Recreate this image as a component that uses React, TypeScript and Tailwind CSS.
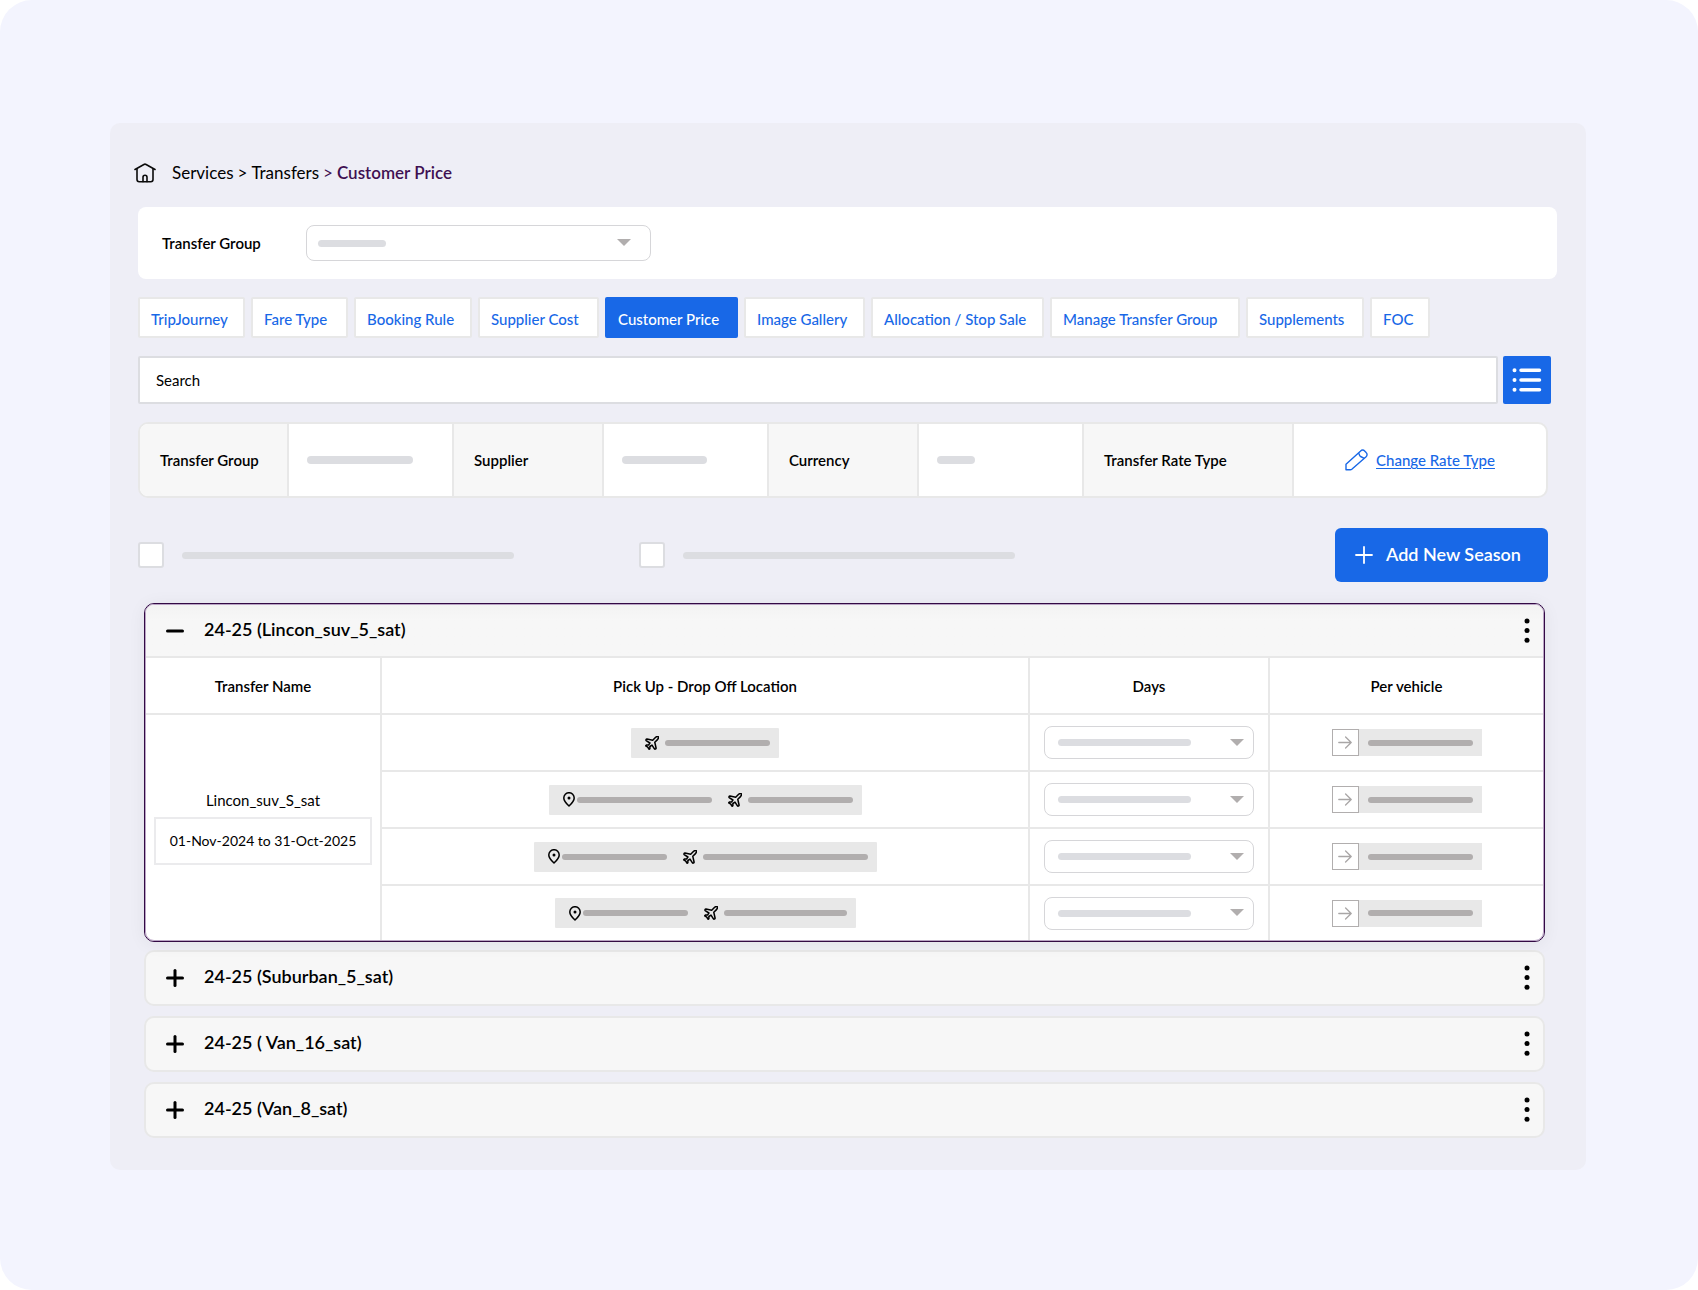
import React from "react";

const tabs = [
  { label: "TripJourney", width: "w-[107px]" },
  { label: "Fare Type", width: "w-[97px]" },
  { label: "Booking Rule", width: "w-[118px]" },
  { label: "Supplier Cost", width: "w-[121px]" },
  { label: "Customer Price", width: "w-[133px]", active: true },
  { label: "Image Gallery", width: "w-[121px]" },
  { label: "Allocation / Stop Sale", width: "w-[173px]" },
  { label: "Manage Transfer Group", width: "w-[190px]" },
  { label: "Supplements", width: "w-[118px]" },
  { label: "FOC", width: "w-[60px]" },
];

const routes = [
  { plane: "w-[105px]" },
  { pin: "w-[135px]", plane: "w-[105px]" },
  { pin: "w-[105px]", plane: "w-[165px]" },
  { pin: "w-[105px]", plane: "w-[123px]" },
];

const closedSeasons = ["24-25 (Suburban_5_sat)", "24-25 ( Van_16_sat)", "24-25 (Van_8_sat)"];

function Bar({ className }: { className: string }) {
  return <span className={`block shrink-0 rounded-full ${className}`} />;
}

function HomeIcon() {
  return (
    <svg width="22" height="20" viewBox="0 0 22 20" fill="none" stroke="#0b0b0b" strokeWidth="1.6" strokeLinecap="round" strokeLinejoin="round">
      <path d="M1 6.5 9.900 1.500a2.200 2.200 0 0 1 2.200 0L21 6.500" />
      <path d="M3 6v10.600A2.200 2.200 0 0 0 5.200 18.800H16.800A2.200 2.200 0 0 0 19 16.600V6" />
      <path d="M9 18.600V14.200a2 2 0 0 1 4 0v4.400" />
    </svg>
  );
}

function PencilIcon() {
  return (
    <svg width="23" height="22" viewBox="0 0 23 22" fill="none" stroke="#1868e7" strokeWidth="1.400" strokeLinejoin="round">
      <path d="M1 20.800V15.300L15.400 2.200a3.200 3.200 0 0 1 4.500 0l1.200 1.200a3 3 0 0 1 0 4.400L6.800 20.300q-.6.5-1.400.5Z" />
      <path d="m13.600 3.900 1.100 2.600q.3.700.9 1l3.700 1.900" />
    </svg>
  );
}

function ListIcon() {
  return (
    <svg width="30" height="26" viewBox="0 0 30 26" fill="none" stroke="#fff" strokeWidth="4" strokeLinecap="round">
      <path d="M2.500 3.300h.01M2.500 13h.01M2.500 22.700h.01" />
      <path strokeWidth="3.500" d="M9 3.300h18.500M9 13h18.500M9 22.700h18.500" />
    </svg>
  );
}

function PlaneIcon() {
  return (
    <svg className="shrink-0" width="14" height="14" viewBox="2 2 20 20" fill="none" stroke="#000" strokeWidth="2.200" strokeLinecap="round" strokeLinejoin="round">
      <path d="M17.8 19.2 16 11l3.500-3.500C21 6 21.500 4 21 3c-1-.5-3 0-4.500 1.500L13 8 4.800 6.200c-.5-.1-.9.1-1.100.5l-.3.5c-.2.5-.1 1 .3 1.300L9 12l-2 3H4l-1 1 3 2 2 3 1-1v-3l3-2 3.500 5.300c.3.4.8.5 1.300.3l.5-.2c.4-.3.6-.7.5-1.200z" />
    </svg>
  );
}

function PinIcon() {
  return (
    <svg className="shrink-0" width="12" height="15" viewBox="0 0 12 15" fill="none" stroke="#000" strokeWidth="1.500" strokeLinejoin="round">
      <path d="M6 14Q.8 9.200.8 5.900a5.200 5.200 0 0 1 10.400 0Q11.200 9.200 6 14Z" />
      <circle cx="6" cy="6" r="1.500" fill="#000" stroke="none" />
    </svg>
  );
}

function Caret() {
  return (
    <svg width="14" height="8" viewBox="0 0 14 8" fill="#b1aeae">
      <path d="M0 0h14L7 7Z" />
    </svg>
  );
}

function DotsButton({ label }: { label: string }) {
  return (
    <button type="button" aria-label={label} className="flex w-6 justify-center">
      <svg width="6" height="26" viewBox="0 0 6 26" fill="#000">
        <circle cx="3" cy="3" r="2.500" />
        <circle cx="3" cy="12.600" r="2.500" />
        <circle cx="3" cy="22.200" r="2.500" />
      </svg>
    </button>
  );
}

function SeasonHeader({ title, open }: { title: string; open?: boolean }) {
  return (
    <div className="flex h-full items-center justify-between pr-1 pl-5">
      <button type="button" aria-expanded={!!open} className="flex items-center gap-5 text-[18px] leading-6 font-semibold">
        <svg width="18" height="18" viewBox="0 0 18 18" stroke="#000" strokeWidth="3" strokeLinecap="round">
          <path d="M1.500 9h15" />
          {!open && <path d="M9 1.500v15" />}
        </svg>
        <span className="pb-1">{title}</span>
      </button>
      <DotsButton label={`Options for ${title}`} />
    </div>
  );
}

function InfoLabel({ children }: { children: React.ReactNode }) {
  return <dt className="flex items-center border-r-2 border-[#e8e8e8] bg-[#f7f7f7] pl-5 font-semibold">{children}</dt>;
}

function InfoBar({ className }: { className: string }) {
  return (
    <dd className="flex items-center border-r-2 border-[#e8e8e8] pl-[18px]">
      <Bar className={`h-2 bg-[#dcdde1] ${className}`} />
    </dd>
  );
}

export default function App() {
  return (
    <div className="min-h-screen rounded-[32px] bg-[#f3f4fe] pt-[123px] pr-[112px] pb-[120px] pl-[110px] font-['Lato',sans-serif] text-[15px] leading-5 text-black">
      <main className="rounded-[10px] bg-[#eeeef6] pt-9 pr-[38px] pb-8 pl-7">
        <nav aria-label="Breadcrumb" className="-ml-1 flex h-7 items-center text-[17px]">
          <HomeIcon />
          <div className="flex gap-1 pl-4">
            <a href="#services">Services</a>
            <span>&gt;</span>
            <a href="#transfers">Transfers</a>
            <span className="text-[#3f1052]">&gt;</span>
            <span aria-current="page" className="font-semibold text-[#3f1052]">Customer Price</span>
          </div>
        </nav>

        <section className="-mr-[9px] mt-5 flex h-[72px] items-center rounded-lg bg-white pl-6">
          <label htmlFor="group" className="w-36 font-semibold">Transfer Group</label>
          <div className="relative w-[345px]">
            <select id="group" className="block h-9 w-full appearance-none rounded-lg border border-[#d6d6d9] bg-white" />
            <div className="pointer-events-none absolute inset-0 flex items-center justify-between pr-5 pl-3">
              <Bar className="h-[7px] w-[68px] bg-[#dcdde1]" />
              <Caret />
            </div>
          </div>
        </section>

        <div className="mt-[18px] flex flex-wrap gap-[6px]">
          {tabs.map((tab) => (
            <button
              key={tab.label}
              type="button"
              className={`h-[41px] rounded-[2px] border-2 pt-[2px] pl-[11px] text-left font-medium whitespace-nowrap ${tab.width} ${
                tab.active ? "border-[#1868e7] bg-[#1868e7] text-white" : "border-[#e8e8e8] bg-white text-[#1868e7]"
              }`}
            >
              {tab.label}
            </button>
          ))}
        </div>

        <div className="mt-[18px] -mr-[3px] flex gap-[5px]">
          <input
            type="text"
            aria-label="Search"
            placeholder="Search"
            className="h-12 min-w-0 flex-1 rounded-[2px] border-2 border-[#dcdde1] bg-white px-4 placeholder:text-black placeholder:opacity-100"
          />
          <button type="button" aria-label="List view" className="flex size-12 items-center justify-center rounded-[2px] bg-[#1868e7]">
            <ListIcon />
          </button>
        </div>

        <dl className="mt-[18px] grid h-[76px] grid-cols-[149fr_165fr_150fr_165fr_150fr_165fr_210fr_252fr] overflow-hidden rounded-[10px] border-2 border-[#e8e8e8] bg-white">
          <InfoLabel>Transfer Group</InfoLabel>
          <InfoBar className="w-[106px]" />
          <InfoLabel>Supplier</InfoLabel>
          <InfoBar className="w-[85px]" />
          <InfoLabel>Currency</InfoLabel>
          <InfoBar className="w-[38px]" />
          <InfoLabel>Transfer Rate Type</InfoLabel>
          <dd className="flex items-center justify-center text-[#1868e7]">
            <a href="#rate-type" className="flex items-center gap-2 font-medium">
              <PencilIcon />
              <span className="underline underline-offset-2">Change Rate Type</span>
            </a>
          </dd>
        </dl>

        <div className="mt-[30px] flex h-[54px] items-center">
          <div className="flex w-[501px] items-center">
            <input type="checkbox" aria-label="First option" className="size-[26px] appearance-none rounded-[3px] border-2 border-[#dcdde1] bg-white" />
            <Bar className="ml-[18px] h-[7px] w-[332px] bg-[#dcdde1]" />
          </div>
          <div className="flex items-center">
            <input type="checkbox" aria-label="Second option" className="size-[26px] appearance-none rounded-[3px] border-2 border-[#dcdde1] bg-white" />
            <Bar className="ml-[18px] h-[7px] w-[332px] bg-[#dcdde1]" />
          </div>
          <button type="button" className="ml-auto flex h-[54px] w-[213px] items-center rounded-md bg-[#1868e7] pl-5 text-[18px] font-semibold whitespace-nowrap text-white">
            <svg width="18" height="18" viewBox="0 0 18 18" stroke="#fff" strokeWidth="1.800" strokeLinecap="round">
              <path d="M1 9h16M9 1v16" />
            </svg>
            <span className="pb-[2px] pl-[13px]">Add New Season</span>
          </button>
        </div>

        <div className="mt-[21px] mr-[3px] ml-[6px]">
          <section className="relative rounded-[10px] border border-[#330a45] shadow-[0_2px_18px_rgba(0,0,0,0.06)]">
            <div className="overflow-hidden rounded-[9px] border border-[#b9a3c4] bg-white">
              <div className="h-[53px] border-b-2 border-[#e8e8e8] bg-linear-to-b from-[#f3f3f3] to-[#f7f7f7] to-30%">
                <SeasonHeader title="24-25 (Lincon_suv_5_sat)" open />
              </div>
              <table className="w-full table-fixed border-separate border-spacing-0 text-center">
                <colgroup>
                  <col className="w-[236px]" />
                  <col />
                  <col className="w-[240px]" />
                  <col className="w-[273px]" />
                </colgroup>
                <thead>
                  <tr className="h-[57px]">
                    <th className="border-r-2 border-b-2 border-[#e8e8e8] font-semibold">Transfer Name</th>
                    <th className="border-r-2 border-b-2 border-[#e8e8e8] font-semibold">Pick Up - Drop Off Location</th>
                    <th className="border-r-2 border-b-2 border-[#e8e8e8] font-semibold">Days</th>
                    <th className="border-b-2 border-[#e8e8e8] font-semibold">Per vehicle</th>
                  </tr>
                </thead>
                <tbody>
                  {routes.map((route, i) => {
                    const line = i === routes.length - 1 ? "" : "border-b-2";
                    return (
                      <tr key={i} className={i === routes.length - 1 ? "h-[54px]" : "h-[57px]"}>
                        {i === 0 && (
                          <td rowSpan={4} className="border-r-2 border-[#e8e8e8] px-2">
                            <div>Lincon_suv_S_sat</div>
                            <div className="mt-[7px] flex h-12 items-center justify-center border-2 border-[#ebebed] text-[14px] whitespace-nowrap">
                              01-Nov-2024 to 31-Oct-2025
                            </div>
                          </td>
                        )}
                        <td className={`border-r-2 border-[#e8e8e8] ${line}`}>
                          <div className="mx-auto flex h-[30px] w-fit items-center rounded-[1px] bg-[#e8e8e8] pr-[9px] pl-[14px]">
                            {route.pin && (
                              <>
                                <PinIcon />
                                <Bar className={`mr-4 ml-[2px] h-[6px] bg-[#b1aeae] ${route.pin}`} />
                              </>
                            )}
                            <PlaneIcon />
                            <Bar className={`ml-[6px] h-[6px] bg-[#b1aeae] ${route.plane}`} />
                          </div>
                        </td>
                        <td className={`border-r-2 border-[#e8e8e8] ${line}`}>
                          <div className="relative mx-auto w-[210px]">
                            <select aria-label={`Days for route ${i + 1}`} className="block h-[33px] w-full appearance-none rounded-lg border border-[#d6d6d9] bg-white" />
                            <div className="pointer-events-none absolute inset-0 flex items-center justify-between pr-[10px] pl-[14px]">
                              <Bar className="h-[7px] w-[133px] bg-[#dcdde1]" />
                              <Caret />
                            </div>
                          </div>
                        </td>
                        <td className={`border-[#e8e8e8] ${line}`}>
                          <div className="mx-auto flex h-[27px] w-[150px] items-center bg-[#e8e8e8]">
                            <button type="button" aria-label={`Apply price to route ${i + 1}`} className="flex size-[27px] items-center justify-center border border-[#b1aeae] bg-white">
                              <svg width="14" height="13" viewBox="0 0 14 13" fill="none" stroke="#a9a6a6" strokeWidth="1.300" strokeLinecap="round" strokeLinejoin="round">
                                <path d="M.8 6.500h12.400M7.600 1l5.600 5.500L7.600 12" />
                              </svg>
                            </button>
                            <Bar className="ml-[9px] h-[6px] w-[105px] bg-[#b1aeae]" />
                          </div>
                        </td>
                      </tr>
                    );
                  })}
                </tbody>
              </table>
            </div>
          </section>

          <div className="mt-2 flex flex-col gap-[10px]">
            {closedSeasons.map((title) => (
              <section key={title} className="h-14 rounded-[10px] border-2 border-[#e8e8e8] bg-[#f7f7f7]">
                <SeasonHeader title={title} />
              </section>
            ))}
          </div>
        </div>
      </main>
    </div>
  );
}
